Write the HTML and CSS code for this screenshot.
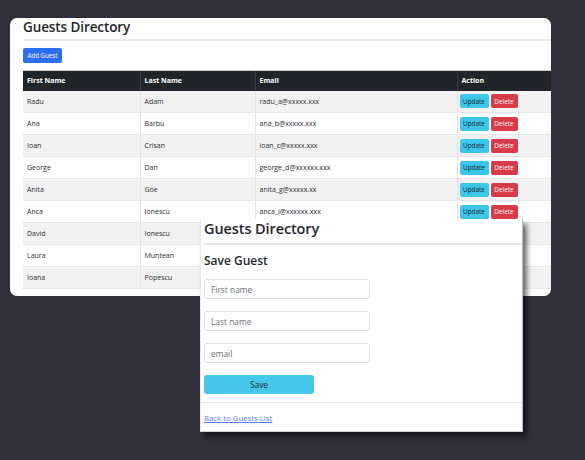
FILE: index.html
```html
<!DOCTYPE html>
<html>
<head>
<meta charset="utf-8">
<link rel="stylesheet" href="styles.css">
</head>
<body>
<div class="card">
  <h1 class="title">Guests Directory</h1>
  <div class="rule"></div>
  <div class="toolbar"><button class="btn btn-add">Add Guest</button></div>
  <table class="guests">
    <thead>
      <tr><th class="c1">First Name</th><th class="c2">Last Name</th><th class="c3">Email</th><th class="c4">Action</th></tr>
    </thead>
    <tbody>
      <tr><td>Radu</td><td>Adam</td><td>radu_a@xxxxx.xxx</td><td><span class="btn btn-upd">Update</span><span class="btn btn-del">Delete</span></td></tr>
      <tr><td>Ana</td><td>Barbu</td><td>ana_b@xxxxx.xxx</td><td><span class="btn btn-upd">Update</span><span class="btn btn-del">Delete</span></td></tr>
      <tr><td>Ioan</td><td>Crisan</td><td>ioan_c@xxxxx.xxx</td><td><span class="btn btn-upd">Update</span><span class="btn btn-del">Delete</span></td></tr>
      <tr><td>George</td><td>Dan</td><td>george_d@xxxxxx.xxx</td><td><span class="btn btn-upd">Update</span><span class="btn btn-del">Delete</span></td></tr>
      <tr><td>Anita</td><td>Goe</td><td>anita_g@xxxxx.xx</td><td><span class="btn btn-upd">Update</span><span class="btn btn-del">Delete</span></td></tr>
      <tr><td>Anca</td><td>Ionescu</td><td>anca_i@xxxxxx.xxx</td><td><span class="btn btn-upd">Update</span><span class="btn btn-del">Delete</span></td></tr>
      <tr><td>David</td><td>Ionescu</td><td>david_i@xxxxx.xxx</td><td><span class="btn btn-upd">Update</span><span class="btn btn-del">Delete</span></td></tr>
      <tr><td>Laura</td><td>Muntean</td><td>laura_m@xxxxx.xxx</td><td><span class="btn btn-upd">Update</span><span class="btn btn-del">Delete</span></td></tr>
      <tr><td>Ioana</td><td>Popescu</td><td>ioana_p@xxxxx.xxx</td><td><span class="btn btn-upd">Update</span><span class="btn btn-del">Delete</span></td></tr>
    </tbody>
  </table>
</div>

<div class="window">
  <h1 class="win-title">Guests Directory</h1>
  <div class="win-rule"></div>
  <h2 class="win-sub">Save Guest</h2>
  <form class="win-form">
    <input class="field" type="text" placeholder="First name">
    <input class="field" type="text" placeholder="Last name">
    <input class="field" type="text" placeholder="email">
    <button type="button" class="btn-save">Save</button>
  </form>
  <div class="win-rule2"></div>
  <a class="back" href="#">Back to Guests List</a>
</div>
</body>
</html>
```

FILE: styles.css
```css
html, body {
  margin: 0;
  padding: 0;
}
body {
  background: #322f3d;
  width: 585px;
  height: 460px;
  overflow: hidden;
  position: relative;
  font-family: "Open Sans", "Noto Sans", sans-serif;
  color: #212529;
}
.card {
  margin: 18px 0 0 10px;
  width: 541px;
  height: 278px;
  box-sizing: border-box;
  padding-left: 13px;
  background: #fff;
  border-radius: 7px;
  overflow: hidden;
  display: flex;
  flex-direction: column;
}
.title {
  margin: 0;
  font-size: 13.5px;
  font-weight: 600;
  line-height: 18px;
  height: 20px;
  letter-spacing: -0.1px;
  white-space: nowrap;
  color: #25282c;
}
.rule {
  margin-top: 1px;
  height: 2px;
  background: #e9e9ea;
}
.toolbar {
  margin-top: 7px;
  height: 15px;
  display: flex;
  align-items: flex-start;
}
.btn {
  font-family: "Open Sans", "Noto Sans", sans-serif;
  border: 0;
  border-radius: 2px;
  display: inline-flex;
  align-items: center;
  justify-content: center;
  padding: 0;
  box-sizing: border-box;
}
.btn-add {
  background: #2f6df6;
  color: #fff;
  width: 39px;
  height: 15px;
  font-size: 6.2px;
}
.guests {
  margin-top: 7px;
  border-collapse: collapse;
  width: 560px;
  table-layout: fixed;
  font-size: 7px;
}
.guests th {
  background: #212529;
  color: #fff;
  text-align: left;
  font-weight: 700;
  height: 20px;
  padding: 0 4px;
  border-left: 1px solid #383d42;
  border-top: 1px solid #c9c9c9;
  box-sizing: border-box;
}
.guests th:first-child { border-left: 0; }
.c1 { width: 117px; }
.c2 { width: 115px; }
.c3 { width: 202px; }
.c4 { width: 126px; }
.guests td {
  height: 22px;
  padding: 0 4px;
  border-left: 1px solid #e3e3e3;
  border-bottom: 1px solid #e6e6e6;
  box-sizing: border-box;
  color: #2a2d31;
  white-space: nowrap;
}
.guests td:first-child { border-left: 0; }
.guests tbody tr:nth-child(odd) td { background: #f2f2f2; }
.guests td:last-child { padding-left: 2px; }
.btn-upd {
  background: #3dc6ec;
  color: #152227;
  width: 29px;
  height: 14px;
  font-size: 6.4px;
  vertical-align: middle;
}
.btn-del {
  background: #d93a47;
  color: #fff;
  width: 27px;
  height: 14px;
  font-size: 6.4px;
  margin-left: 2px;
  vertical-align: middle;
}

.window {
  position: absolute;
  left: 200px;
  top: 219px;
  width: 323px;
  height: 213px;
  box-sizing: border-box;
  background: #fff;
  border-right: 1px solid #bdbdbd;
  border-bottom: 1px solid #cfcfcf;
  border-left: 1px solid #e8e8e8;
  padding-left: 3px;
  box-shadow: 4px 5px 5px rgba(0, 0, 0, 0.55);
  display: flex;
  flex-direction: column;
}
.win-title {
  margin: 0;
  font-size: 14.5px;
  font-weight: 600;
  line-height: 20px;
  height: 24px;
  box-sizing: border-box;
  letter-spacing: -0.1px;
  white-space: nowrap;
  color: #25282c;
}
.win-rule {
  height: 2px;
  background: #e6e6e6;
}
.win-sub {
  margin: 7px 0 0 0;
  font-size: 12px;
  font-weight: 600;
  line-height: 18px;
  height: 18px;
  color: #25282c;
}
.win-form {
  margin: 9px 0 0 0;
  display: flex;
  flex-direction: column;
  align-items: flex-start;
  gap: 12px;
}
.field {
  width: 166px;
  height: 20px;
  box-sizing: border-box;
  border: 1px solid #dcdfe3;
  border-radius: 3px;
  padding: 0 6px;
  font-family: "Open Sans", "Noto Sans", sans-serif;
  font-size: 8.4px;
  margin: 0;
  background: #fff;
}
.field::placeholder { color: #6c7177; }
.btn-save {
  width: 110px;
  height: 19px;
  border: 0;
  border-radius: 3px;
  background: #45c7ec;
  color: #1d2b31;
  font-family: "Open Sans", "Noto Sans", sans-serif;
  font-size: 8.4px;
  padding: 0;
}
.win-rule2 {
  margin: 8px 0 0 -3px;
  height: 1px;
  background: #e3e3e3;
}
.back {
  margin-top: 9px;
  font-size: 7.8px;
  color: #5b82ef;
  text-decoration: underline;
  line-height: 12px;
  align-self: flex-start;
}
```
